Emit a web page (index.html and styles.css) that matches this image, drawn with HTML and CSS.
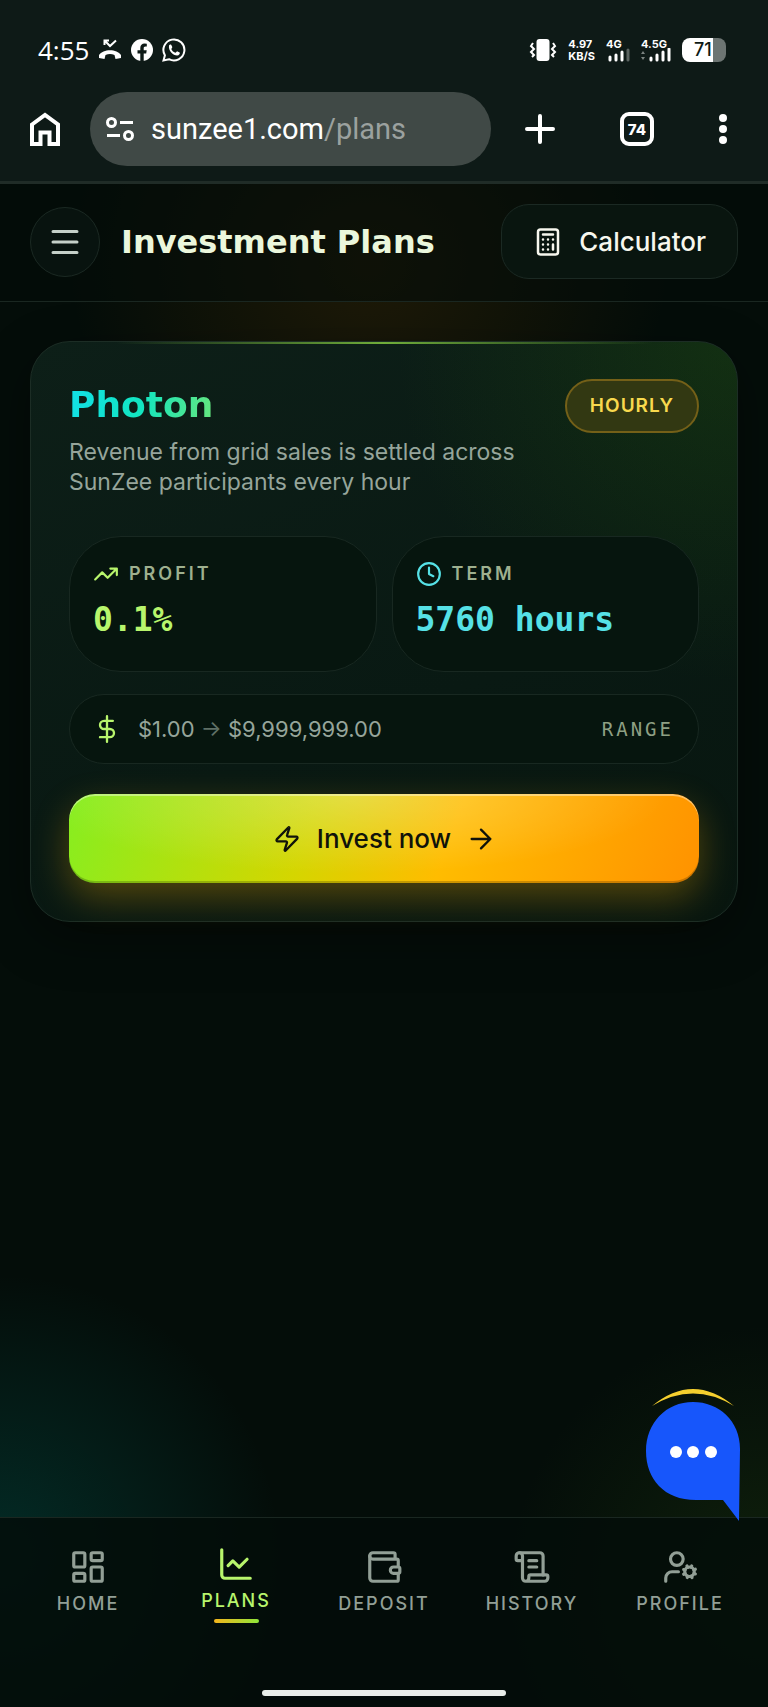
FILE: index.html
```html
<!DOCTYPE html>
<html lang="en">
  <head>
    <meta charset="UTF-8" />
    <meta name="viewport" content="width=device-width, initial-scale=1" />
    <title>Investment Plans</title>
    <link rel="stylesheet" href="styles.css">
  </head>
  <body>
    <div class="chrome">
      <div class="status">
        <span class="time">4:55</span>
        <svg width="24" height="24" viewBox="0 0 24 24" fill="none" stroke="#fff">
          <path d="M6.500 7V2.500H11M7 3l5 5 6-5.500" stroke-width="2" />
          <path d="M1 20v-3c4-6.500 18-6.500 22 0v3l-5.500 1-1-4c-3-1.200-6-1.200-9 0l-1 4z" fill="#fff" stroke="none" />
        </svg>
        <svg class="fb" width="22" height="22" viewBox="0 0 22 22">
          <circle cx="11" cy="11" r="11" fill="#fff" />
          <path d="M9.300 22v-7.500H6.500v-3.200h2.800V9c0-3 1.700-4.500 4.300-4.500l2.200.2v2.800h-1.300c-1.400 0-1.800.8-1.800 1.700v2.100h3l-.5 3.200h-2.500V22z" fill="#0e1a17" />
        </svg>
        <svg width="24" height="24" viewBox="0 0 24 24" fill="none">
          <path d="M1.500 22.500l1.400-5.200A10.500 10.500 0 1 1 7 21.200z" stroke="#fff" stroke-width="2" />
          <path d="M7 7.500c.6-1 1.700-1.400 2.300-.6l1 2.200c.2.800-1.200 1.700-.9 2.200 1 1.800 2 2.700 3.800 3.500.8.200 1.500-1.700 2.300-1.400l2.200 1.200c.6 1-.6 2.900-2.600 3-4 0-9-5-8.100-10.100z" fill="#fff" />
        </svg>
        <div class="status-right">
          <svg class="vibrate" width="28" height="24" viewBox="0 0 28 24">
            <rect x="7.500" y="1" width="13" height="22" rx="3" fill="#fff" />
            <path d="M4 5l-2 3 3 3-3 3 3 3-2 2M24 5l2 3-3 3 3 3-3 3 2 2" fill="none" stroke="#fff" stroke-width="2" />
          </svg>
          <span class="speed">4.97<br />KB/S</span>
          <span class="signal">4G
            <svg width="24" height="14" viewBox="0 0 24 14" stroke="#fff" stroke-width="3" stroke-linecap="round">
              <path d="M4 9v3M10 7v5M16 4v8" />
              <path d="M22 2v10" stroke="#5b6461" />
            </svg>
          </span>
          <span class="signal wide">4.5G
            <svg width="30" height="14" viewBox="0 0 30 14" stroke="#fff" stroke-width="3" stroke-linecap="round">
              <path d="M0 6l2-3 2 3zM0 9l2 3 2-3z" fill="#7b8481" stroke="none" />
              <path d="M10 10v2M16 7v5M22 4v8M28 1v11" />
            </svg>
          </span>
          <span class="battery">71</span>
        </div>
      </div>
      <div class="toolbar">
        <button class="tool" aria-label="Home page">
          <svg width="30" height="34" viewBox="0 0 30 34" fill="none" stroke="#fff" stroke-width="4">
            <path d="M2 12.500L15 3l13 9.500V32h-8.500V20.500h-9V32H2z" />
          </svg>
        </button>
        <button class="url">
          <svg width="28" height="26" viewBox="0 0 28 26" fill="none" stroke="#fff" stroke-width="3">
            <circle cx="5.500" cy="6.500" r="4" />
            <path d="M14 6.500h13M1 19.500h13" />
            <circle cx="22.500" cy="19.500" r="4" />
          </svg>
          <span class="host">sunzee1.com<span class="path">/plans</span></span>
        </button>
        <div class="tools">
          <button class="tool" aria-label="New tab">
            <svg width="32" height="32" viewBox="0 0 32 32" stroke="#fff" stroke-width="4" stroke-linecap="round">
              <path d="M16 3v26M3 16h26" />
            </svg>
          </button>
          <button class="tool tabs">74</button>
          <button class="tool" aria-label="More">
            <svg width="10" height="32" viewBox="0 0 10 32" fill="#fff">
              <circle cx="5" cy="5" r="4" />
              <circle cx="5" cy="16" r="4" />
              <circle cx="5" cy="27" r="4" />
            </svg>
          </button>
        </div>
      </div>
    </div>

    <div class="app">
      <header class="header">
        <button class="menu" aria-label="Menu">
          <svg width="36" height="36" viewBox="0 0 24 24" class="icon">
            <path d="M4 5h16M4 12h16M4 19h16" />
          </svg>
        </button>
        <h1>Investment Plans</h1>
        <button class="calculator">
          <svg width="30" height="30" viewBox="0 0 24 24" class="icon">
            <rect x="4" y="2" width="16" height="20" rx="2" />
            <path d="M8 6h8M16 14v4M16 10h.01M12 10h.01M8 10h.01M12 14h.01M8 14h.01M12 18h.01M8 18h.01" />
          </svg>
          Calculator
        </button>
      </header>

      <main>
        <section class="card">
          <div class="card-head">
            <div>
              <h2>Photon</h2>
              <p>Revenue from grid sales is settled across SunZee participants every hour</p>
            </div>
            <span class="badge">HOURLY</span>
          </div>

          <div class="stats">
            <div class="stat profit">
              <div class="label">
                <svg width="26" height="26" viewBox="0 0 24 24" class="icon">
                  <path d="M16 7h6v6M22 7l-8.500 8.500-5-5L2 17" />
                </svg>
                PROFIT
              </div>
              <div class="value">0.1%</div>
            </div>
            <div class="stat term">
              <div class="label">
                <svg width="26" height="26" viewBox="0 0 24 24" class="icon">
                  <circle cx="12" cy="12" r="10" />
                  <path d="M12 6v6l4 2" />
                </svg>
                TERM
              </div>
              <div class="value">5760 hours</div>
            </div>
          </div>

          <div class="range">
            <svg width="28" height="28" viewBox="0 0 24 24" class="icon">
              <path d="M12 1v22M17 5H9.500a3.500 3.500 0 0 0 0 7h5a3.500 3.500 0 0 1 0 7H6" />
            </svg>
            <span>$1.00 <span class="to">→</span> $9,999,999.00</span>
            <span class="range-label">RANGE</span>
          </div>

          <button class="invest">
            <svg width="28" height="28" viewBox="0 0 24 24" class="icon">
              <path d="M4 14a1 1 0 0 1-.78-1.630l9.900-10.200a.5.5 0 0 1 .86.460l-1.920 6.020A1 1 0 0 0 13 10h7a1 1 0 0 1 .78 1.630l-9.900 10.200a.5.5 0 0 1-.86-.460l1.920-6.020A1 1 0 0 0 11 14z" />
            </svg>
            Invest now
            <svg width="28" height="28" viewBox="0 0 24 24" class="icon">
              <path d="M4 12h16M12 4l8 8-8 8" />
            </svg>
          </button>
        </section>
      </main>

      <footer>
        <button class="chat" aria-label="Open chat">
          <svg width="96" height="136" viewBox="0 0 96 136">
            <path d="M6 19Q47-15 88 19Q47-6 6 19z" fill="#f5cf2e" />
            <path d="M47 15C73 15 94 34 94 62L93 134 77 113H50C18 113 0 92 0 64S20 15 47 15z" fill="#1756fb" />
            <g fill="#fff">
              <circle cx="30" cy="65" r="6" />
              <circle cx="47" cy="65" r="6" />
              <circle cx="65" cy="65" r="6" />
            </g>
          </svg>
        </button>
        <nav>
          <a href="#home">
            <svg width="38" height="38" viewBox="0 0 24 24" class="icon">
              <rect x="3" y="3" width="7" height="9" rx="1" />
              <rect x="14" y="3" width="7" height="5" rx="1" />
              <rect x="14" y="12" width="7" height="9" rx="1" />
              <rect x="3" y="16" width="7" height="5" rx="1" />
            </svg>
            HOME
          </a>
          <a href="#plans" class="active">
            <svg width="38" height="38" viewBox="0 0 24 24" class="icon">
              <path d="M3 3v16a2 2 0 0 0 2 2h16M19 9l-5 5-4-4-3 3" />
            </svg>
            PLANS
          </a>
          <a href="#deposit">
            <svg width="38" height="38" viewBox="0 0 24 24" class="icon">
              <path d="M19 7V4a1 1 0 0 0-1-1H5a2 2 0 0 0 0 4h15a1 1 0 0 1 1 1v4h-3a2 2 0 0 0 0 4h3a1 1 0 0 0 1-1v-2a1 1 0 0 0-1-1" />
              <path d="M3 5v14a2 2 0 0 0 2 2h15a1 1 0 0 0 1-1v-4" />
            </svg>
            DEPOSIT
          </a>
          <a href="#history">
            <svg width="38" height="38" viewBox="0 0 24 24" class="icon">
              <path d="M15 12h-5M15 8h-5M19 17V5a2 2 0 0 0-2-2H4" />
              <path d="M8 21h12a2 2 0 0 0 2-2v-1a1 1 0 0 0-1-1H11a1 1 0 0 0-1 1v1a2 2 0 1 1-4 0V5a2 2 0 1 0-4 0v2a1 1 0 0 0 1 1h3" />
            </svg>
            HISTORY
          </a>
          <a href="#profile">
            <svg width="38" height="38" viewBox="0 0 24 24" class="icon">
              <circle cx="10" cy="7" r="4" />
              <path d="M11 15H7a4 4 0 0 0-4 4v2" />
              <circle cx="18" cy="15" r="3" />
              <path d="M21.700 16.400l-.9-.3M15.200 13.900l-.9-.3M16.600 18.700l.3-.9M19.100 12.200l.3-.9M19.600 18.700l-.4-1M16.800 12.300l-.4-1M14.300 16.600l1-.4M20.700 13.800l1-.4" />
            </svg>
            PROFILE
          </a>
        </nav>
        <div class="home-indicator"></div>
      </footer>
    </div>
  </body>
</html>
```

FILE: styles.css
```css
* {
  box-sizing: border-box;
}
body {
  margin: 0;
  min-height: 100vh;
  display: flex;
  flex-direction: column;
  background: #040d09;
  color: #eef5e6;
  font-family: Inter, "Liberation Sans", sans-serif;
}
h1, h2, p {
  margin: 0;
}
button {
  border: 0;
  padding: 0;
  background: none;
  color: inherit;
  font: inherit;
}
svg {
  display: block;
  flex: none;
}
.icon {
  fill: none;
  stroke: currentColor;
  stroke-width: 2;
  stroke-linecap: round;
  stroke-linejoin: round;
}

/* browser chrome */
.chrome {
  background: #0e1a17;
  border-bottom: 3px solid #202c27;
  color: #fff;
}
.status {
  display: flex;
  align-items: center;
  gap: 9px;
  height: 92px;
  padding: 8px 42px 0 38px;
}
.time {
  font: 26px "Open Sans", sans-serif;
}
.status-right {
  display: flex;
  align-items: center;
  gap: 11px;
  height: 24px;
  margin-left: auto;
}
.speed,
.signal {
  font-size: 11px;
  font-weight: 700;
  line-height: 12px;
}
.signal {
  width: 24px;
}
.signal.wide {
  width: 30px;
}
.signal svg {
  margin-top: -2px;
}
.battery {
  width: 44px;
  height: 24px;
  padding-left: 12px;
  border-radius: 8px;
  background: linear-gradient(90deg, #fff 70%, #6d7573 70%);
  color: #0e1a17;
  font: 500 18px/24px Inter, sans-serif;
}
.toolbar {
  display: flex;
  align-items: center;
  height: 89px;
  padding: 0 40px 15px 30px;
}
.tool {
  display: flex;
  align-items: center;
  justify-content: center;
}
.url {
  display: flex;
  align-items: center;
  gap: 17px;
  flex: 1;
  height: 74px;
  margin: 0 33px 0 30px;
  padding: 0 16px;
  border-radius: 37px;
  background: #404946;
  text-align: left;
}
.host {
  font: 29px Roboto, sans-serif;
}
.path {
  color: #9ba19f;
}
.tools {
  display: flex;
  align-items: center;
  gap: 64px;
}
.tabs {
  width: 34px;
  height: 34px;
  border: 4px solid #fff;
  border-radius: 9px;
  font-size: 15px;
  font-weight: 800;
}

/* app */
.app {
  display: flex;
  flex-direction: column;
  flex: 1;
  background:
    radial-gradient(circle at 0 90%, rgba(0, 140, 130, 0.24), transparent 280px) no-repeat,
    radial-gradient(circle at 100% 92%, rgba(60, 110, 20, 0.2), transparent 260px) no-repeat,
    radial-gradient(ellipse 300px 260px at 48% 80px, rgba(140, 80, 0, 0.2), transparent) no-repeat,
    #040d09;
}
.header {
  display: flex;
  align-items: center;
  height: 118px;
  padding: 0 30px 2px;
  border-bottom: 1px solid #1a2721;
  background: rgba(3, 12, 8, 0.6);
}
.menu {
  display: grid;
  place-items: center;
  width: 70px;
  height: 70px;
  border: 1px solid #1b2923;
  border-radius: 50%;
  background: #08130f;
  color: #c5d0c9;
}
.header h1 {
  margin-left: 21px;
  font: 700 32px "DejaVu Sans", sans-serif;
  color: #ebf7dc;
}
.calculator {
  display: flex;
  align-items: center;
  gap: 16px;
  height: 75px;
  margin-left: auto;
  padding: 0 31px;
  border: 1px solid #1b2923;
  border-radius: 28px;
  background: #09150f;
  color: #f7f7ee;
  font-size: 26px;
  font-weight: 500;
}
main {
  flex: 1;
  padding: 39px 30px;
}
.card {
  padding: 37px 38px 38px;
  border: 1px solid #1c2d25;
  border-radius: 40px;
  background:
    linear-gradient(90deg, transparent 12%, #70ad3a 50%, transparent 88%) top / 100% 2px no-repeat,
    radial-gradient(circle at 100% 0, rgba(40, 100, 10, 0.28), transparent 340px),
    linear-gradient(160deg, #0d1f18, #091913 60%, #08160f);
  box-shadow: 0 16px 50px rgba(0, 0, 0, 0.4);
}
.card-head {
  display: flex;
  justify-content: space-between;
  align-items: flex-start;
}
.card h2 {
  width: max-content;
  font: 700 36px/52px "DejaVu Sans", sans-serif;
  background: linear-gradient(100deg, #12e0e8, #12e5c0 50%, #68e67c);
  background-clip: text;
  color: transparent;
}
.card p {
  max-width: 480px;
  margin-top: 6px;
  color: #96a59b;
  font-size: 23px;
  line-height: 30px;
}
.badge {
  padding: 0 23px;
  border: 2px solid #746018;
  border-radius: 27px;
  background: #323812;
  color: #f8d94e;
  font-size: 19px;
  font-weight: 600;
  line-height: 50px;
  letter-spacing: 1px;
}
.stats {
  display: grid;
  grid-template-columns: 1fr 1fr;
  gap: 15px;
  margin-top: 39px;
}
.stat,
.range {
  border: 1px solid #182821;
  background: #06150e;
}
.stat {
  height: 136px;
  padding: 23px;
  border-radius: 52px;
}
.label {
  display: flex;
  align-items: center;
  gap: 10px;
  color: #9eb08f;
  font-size: 18px;
  font-weight: 600;
  line-height: 28px;
  letter-spacing: 3px;
}
.value {
  margin-top: 12px;
  font: 700 33px/40px "DejaVu Sans Mono", monospace;
}
.profit .icon,
.profit .value,
.range .icon {
  color: #b8f56c;
}
.term .icon,
.term .value {
  color: #56e1e6;
}
.range {
  display: flex;
  align-items: center;
  gap: 17px;
  height: 70px;
  margin-top: 22px;
  padding: 0 24px 0 23px;
  border-radius: 35px;
  color: #96a59b;
  font-size: 22px;
}
.to {
  color: #5f7066;
}
.range-label {
  margin-left: auto;
  color: #8ea084;
  font: 19px "DejaVu Sans Mono", monospace;
  letter-spacing: 3px;
}
.invest {
  display: flex;
  align-items: center;
  justify-content: center;
  gap: 16px;
  width: 100%;
  height: 89px;
  margin-top: 30px;
  border-radius: 26px;
  background:
    radial-gradient(ellipse 50% 90% at 45% 0, rgba(255, 255, 255, 0.26), transparent),
    linear-gradient(110deg, #86ee20, #d4d600 38%, #ffbc00 60%, #ff9200);
  box-shadow:
    0 14px 36px rgba(255, 180, 0, 0.3),
    inset 0 2px 0 rgba(255, 255, 255, 0.4),
    inset 0 -2px 0 rgba(0, 0, 0, 0.2);
  color: #10130a;
  font-size: 26px;
  font-weight: 500;
}

/* bottom navigation */
footer {
  position: relative;
  border-top: 1px solid #1a2721;
  background: rgba(4, 13, 9, 0.85);
}
nav {
  display: grid;
  grid-template-columns: repeat(5, 1fr);
  padding: 30px 14px 0;
}
nav a {
  display: flex;
  flex-direction: column;
  align-items: center;
  gap: 6px;
  color: #929f96;
  font-size: 18px;
  font-weight: 500;
  line-height: 24px;
  letter-spacing: 2px;
  text-decoration: none;
}
nav .active {
  margin-top: -3px;
  color: #b8f56c;
}
nav .active::after {
  content: "";
  width: 45px;
  height: 4px;
  border-radius: 2px;
  background: linear-gradient(90deg, #f5b51c, #8fe63a);
}
.home-indicator {
  width: 244px;
  height: 6px;
  margin: 67px auto 11px;
  border-radius: 3px;
  background: #e9eeea;
}
.chat {
  position: absolute;
  right: 26px;
  bottom: 184px;
}
```
